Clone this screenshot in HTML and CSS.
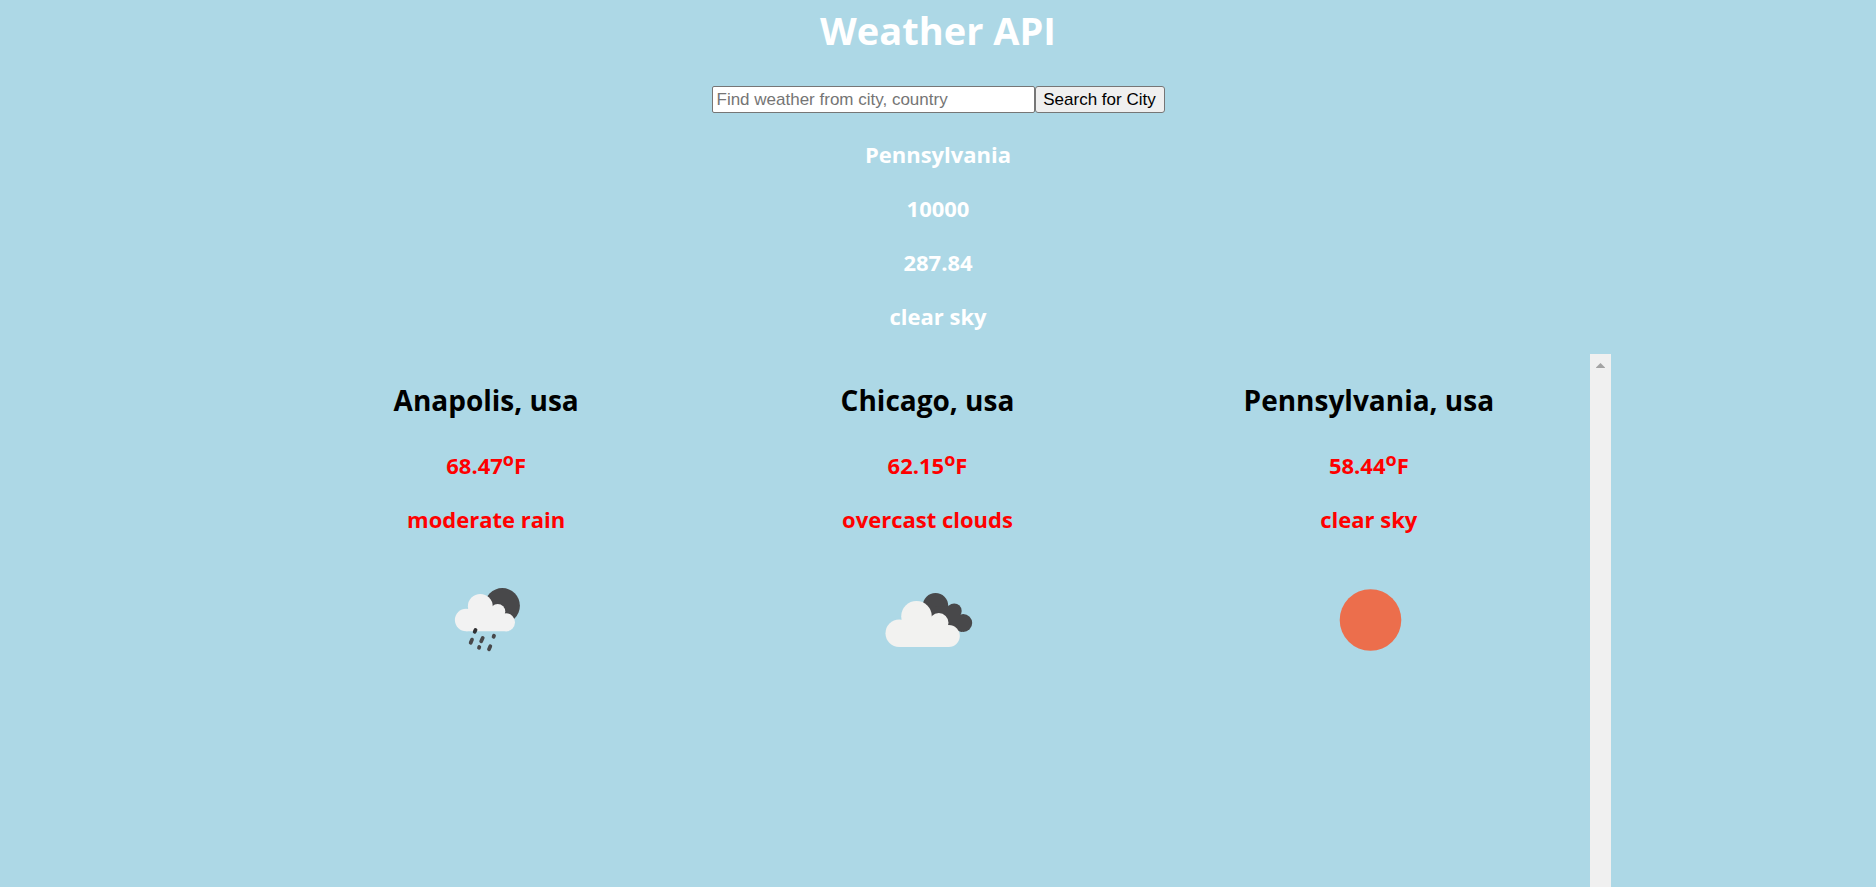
FILE: index.html
```html
<!DOCTYPE html>
<html lang="en">
<head>
<meta charset="utf-8">
<title>Weather API</title>
<link rel="stylesheet" href="styles.css">
</head>
<body>
<header class="top">
  <h1 class="title">Weather API</h1>
  <form class="search">
    <input class="search-input" type="text" aria-label="City, country" placeholder="Find weather from city, country">
    <button class="search-button" type="button">Search for City</button>
  </form>
  <section class="current">
    <h3>Pennsylvania</h3>
    <h3>10000</h3>
    <h3>287.84</h3>
    <h3>clear sky</h3>
  </section>
</header>
<main class="results">
  <div class="cards">
    <article class="card">
      <h2>Anapolis, usa</h2>
      <h3>68.47<sup>o</sup>F</h3>
      <h3>moderate rain</h3>
      <svg class="icon" viewBox="-1 1 125 125" role="img" aria-label="moderate rain">
        <circle cx="77.3" cy="48.7" r="17.6" fill="#48484a"/>
        <g fill="#f2f2f2">
          <circle cx="41.2" cy="63" r="11.3"/>
          <circle cx="55.3" cy="49.3" r="12.4"/>
          <circle cx="72.7" cy="54.6" r="7.6"/>
          <circle cx="81" cy="65.3" r="9"/>
          <path d="M41.2 52H72L82 60V74.3H41.2Z"/>
        </g>
        <g stroke="#48484a" stroke-width="3.8" stroke-linecap="round">
          <path stroke="#303032" d="M50.5 73L49.7 74.8"/>
          <path d="M47 82.6L45.7 85.8M57.7 81L56.2 84.2M69 78.7L68.6 79.7M54.3 90L54 90.8M65.3 89.3L64 92.2"/>
        </g>
      </svg>
    </article>
    <article class="card">
      <h2>Chicago, usa</h2>
      <h3>62.15<sup>o</sup>F</h3>
      <h3>overcast clouds</h3>
      <svg class="icon" viewBox="0 1 125 125" role="img" aria-label="overcast clouds">
        <g fill="#48484a">
          <circle cx="70.5" cy="48.7" r="12.7"/>
          <circle cx="89.2" cy="53.9" r="7.5"/>
          <circle cx="98.2" cy="66" r="9"/>
          <path d="M70 50L86 49L97 60L97 75L80 70Z"/>
        </g>
        <g fill="#f2f2f0">
          <circle cx="34.2" cy="76.3" r="13.7"/>
          <circle cx="51.5" cy="59.3" r="15.3"/>
          <circle cx="73.8" cy="65.8" r="9.7"/>
          <circle cx="83.8" cy="79" r="11"/>
          <path d="M34.2 63H74L84 72V90H34.2Z"/>
        </g>
      </svg>
    </article>
    <article class="card">
      <h2>Pennsylvania, usa</h2>
      <h3>58.44<sup>o</sup>F</h3>
      <h3>clear sky</h3>
      <svg class="icon" viewBox="-1 1 125 125" role="img" aria-label="clear sky">
        <circle cx="63.5" cy="63" r="30.8" fill="#ec6e4c"/>
      </svg>
    </article>
  </div>
  <div class="scrollbar" aria-hidden="true">
    <svg class="arrow" viewBox="0 0 9 5"><path d="M4.5 0L9 4.5V5H0V4.5Z" fill="#a3a3a3"/></svg>
  </div>
</main>
</body>
</html>
```
FILE: styles.css
```css
* { box-sizing: border-box; }

body {
  margin: 0;
  height: 100vh;
  overflow: hidden;
  display: flex;
  flex-direction: column;
  background: #add8e6;
  font-family: "Open Sans", "Noto Sans", sans-serif;
  text-align: center;
}

h1, h2, h3 { margin: 0; font-weight: 700; }
h2 { font-size: 28px; line-height: 40px; }
h3 { font-size: 22px; line-height: 31px; }

.top { padding: 4px 0 22px; color: #fff; }
.title { font-size: 38px; line-height: 53px; }

.search {
  display: flex;
  justify-content: center;
  margin: 29px 0 26px;
}
.search-input,
.search-button {
  height: 27px;
  border: 1px solid #767676;
  border-radius: 2px;
  font: 17px "Liberation Sans", Arial, sans-serif;
}
.search-input { width: 323px; padding: 0 4px; background: #fff; }
.search-input::placeholder { color: #757575; opacity: 1; }
.search-button {
  width: 130px;
  padding: 0;
  border-radius: 3px;
  background: #efefef;
  color: #000;
}

.current { display: grid; gap: 23px; }

.results {
  flex: 1;
  display: flex;
  width: 100%;
  max-width: 1345px;
  margin: 0 auto;
}
.cards {
  flex: 1;
  display: grid;
  grid-template-columns: repeat(3, 1fr);
  padding-top: 26px;
}
.card {
  display: flex;
  flex-direction: column;
  align-items: center;
  gap: 23px;
}
.card h2 { margin-bottom: 7px; color: #000; }
.card h3 { color: #f00; }
.card sup { font-size: 18px; line-height: 0; }
.icon { width: 125px; height: 125px; }

.scrollbar { width: 21px; padding-top: 9px; background: #f0f0f0; }
.arrow { display: block; width: 9px; height: 5px; margin: 0 auto; }
```
